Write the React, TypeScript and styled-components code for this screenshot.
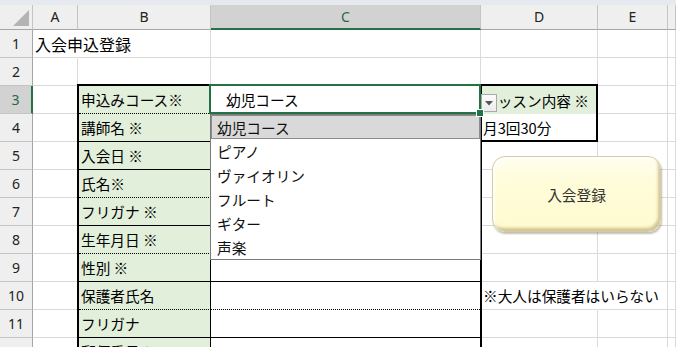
import React from 'react';
import styled, { createGlobalStyle } from 'styled-components';

const GREEN = '#217346';
const GRID = '#dadada';
const JP = '"Noto Sans CJK JP", "Noto Sans", sans-serif';

const GlobalStyle = createGlobalStyle`
  html, body { margin: 0; padding: 0; background: #fff; }
  body { font-family: ${JP}; }
`;

const Sheet = styled.div`
  display: grid;
  grid-template-columns: 33px 45px 133px 270px 117px 70px 1fr;
  grid-template-rows: 5px 25px repeat(12, 28px);
  width: 676px;
  height: 347px;
  overflow: hidden;
  background: #fff;
  font-family: ${JP};
  color: #000;
`;

const TopStrip = styled.div`
  grid-column: 1 / -1;
  grid-row: 1;
  background: #e6e9ef;
`;

const Corner = styled.div`
  grid-column: 1;
  grid-row: 2;
  background: #efefef;
  border-right: 1px solid #c4c4c4;
  border-bottom: 1px solid #a6a6a6;
  display: flex;
  align-items: flex-end;
  justify-content: flex-end;
  padding: 0 3px 3px 0;
`;

const ColHeader = styled.div<{ $col: number; $active?: boolean }>`
  grid-column: ${(p) => p.$col};
  grid-row: 2;
  display: flex;
  align-items: center;
  justify-content: center;
  background: ${(p) => (p.$active ? '#d2d2d2' : '#efefef')};
  border-right: 1px solid #c4c4c4;
  border-bottom: ${(p) => (p.$active ? `2px solid ${GREEN}` : '1px solid #a6a6a6')};
  color: ${(p) => (p.$active ? '#1d6b43' : '#222')};
  font: 14px "Noto Sans", sans-serif;
  padding-bottom: 1px;
`;

const RowHeader = styled.div<{ $row: number; $active?: boolean }>`
  grid-column: 1;
  grid-row: ${(p) => p.$row + 2};
  display: flex;
  align-items: center;
  justify-content: center;
  background: ${(p) => (p.$active ? '#d2d2d2' : '#efefef')};
  border-right: ${(p) => (p.$active ? `2px solid ${GREEN}` : '1px solid #a6a6a6')};
  border-bottom: 1px solid #c4c4c4;
  color: ${(p) => (p.$active ? '#1d6b43' : '#222')};
  font: 14px "Noto Sans", sans-serif;
`;

const Cell = styled.div<{ $row: number; $col: number; $open?: boolean; $size?: number }>`
  grid-column: ${(p) => p.$col + 1};
  grid-row: ${(p) => p.$row + 2};
  border-right: 1px solid ${(p) => (p.$open ? 'transparent' : GRID)};
  border-bottom: 1px solid ${GRID};
  display: flex;
  align-items: center;
  padding-left: 2px;
  white-space: nowrap;
  overflow: visible;
  font-size: ${(p) => p.$size ?? 14.67}px;
  z-index: ${(p) => (p.$open ? 1 : 0)};
`;

const FormTable = styled.div`
  grid-column: 3 / 5;
  grid-row: 5 / 15;
  margin: -2px -1px 0 -1px;
  border: 2px solid #000;
  border-bottom: none;
  display: grid;
  grid-template-columns: 132px 1fr;
  grid-auto-rows: 28px;
  z-index: 2;
  background: #fff;
`;

const FormLabel = styled.div<{ $line: 'solid' | 'dotted' }>`
  background: #e2efda;
  border-right: 1px solid #000;
  border-bottom: 1px ${(p) => p.$line} #000;
  display: flex;
  align-items: center;
  padding-left: 2px;
  font-size: 14.67px;
  white-space: nowrap;
`;

const FormValue = styled.div<{ $line: 'solid' | 'dotted' }>`
  background: #fff;
  border-bottom: 1px ${(p) => p.$line} #000;
  display: flex;
  align-items: center;
  padding-left: 15px;
  font-size: 14.67px;
  white-space: nowrap;
`;

const LessonBox = styled.div`
  grid-column: 5;
  grid-row: 5 / 7;
  margin: -2px 0 0 1px;
  border: 2px solid #000;
  border-left: none;
  display: grid;
  grid-template-rows: 28px 1fr;
  z-index: 2;
`;

const LessonCell = styled.div<{ $head?: boolean }>`
  background: ${(p) => (p.$head ? '#e2efda' : '#fff')};
  display: flex;
  align-items: center;
  padding-left: 1px;
  font-size: 14.67px;
  white-space: nowrap;
  overflow: hidden;
`;

const Selection = styled.div`
  grid-column: 4;
  grid-row: 5;
  margin: -2px 0 0 -2px;
  border: 2px solid ${GREEN};
  position: relative;
  z-index: 5;
`;

const FillHandle = styled.div`
  position: absolute;
  right: -4px;
  bottom: -4px;
  width: 6px;
  height: 6px;
  background: ${GREEN};
  box-shadow: 0 0 0 1px #fff;
`;

const DropArrow = styled.div`
  position: absolute;
  left: calc(100% + 2px);
  top: 8px;
  width: 16px;
  height: 18px;
  box-sizing: border-box;
  border: 1px solid #a9a9a9;
  background: linear-gradient(#fbfbfb, #ececec);
  display: flex;
  align-items: center;
  justify-content: center;
`;

const DropList = styled.ul`
  position: absolute;
  left: -1px;
  top: calc(100% + 2px);
  width: 271px;
  box-sizing: border-box;
  margin: 0;
  padding: 0;
  list-style: none;
  background: #fff;
  border: 1px solid #7a7a7a;
`;

const DropItem = styled.li<{ $selected?: boolean }>`
  height: 24px;
  box-sizing: border-box;
  display: flex;
  align-items: center;
  padding-left: ${(p) => (p.$selected ? 5 : 6)}px;
  font-size: 14.67px;
  color: #111;
  background: ${(p) => (p.$selected ? '#d9d9d9' : '#fff')};
  border: ${(p) => (p.$selected ? '1px solid #8c8c8c' : 'none')};
`;

const ShapeButton = styled.button`
  grid-column: 5 / 8;
  grid-row: 7 / 10;
  justify-self: start;
  align-self: start;
  margin: 14px 0 0 11px;
  width: 169px;
  height: 76px;
  border-radius: 13px;
  border: 1px solid #d6cc9c;
  background: linear-gradient(#fffef0 0%, #fffcd9 35%, #fffad0 100%);
  box-shadow:
    inset 2px 2px 2px #ffffff,
    inset -2px -3px 3px rgba(150, 130, 70, 0.45),
    1px 2px 2px rgba(80, 70, 40, 0.35);
  font-family: ${JP};
  font-size: 14.67px;
  color: #333;
  z-index: 3;
  padding: 0;
`;

const columns = ['A', 'B', 'C', 'D', 'E', ''];

const formRows: { label: string; value?: string; line: 'solid' | 'dotted' }[] = [
  { label: '申込みコース※', value: '幼児コース', line: 'dotted' },
  { label: '講師名 ※', line: 'solid' },
  { label: '入会日 ※', line: 'solid' },
  { label: '氏名※', line: 'dotted' },
  { label: 'フリガナ ※', line: 'solid' },
  { label: '生年月日 ※', line: 'dotted' },
  { label: '性別 ※', line: 'solid' },
  { label: '保護者氏名', line: 'dotted' },
  { label: 'フリガナ', line: 'solid' },
  { label: '郵便番号※', line: 'solid' },
];

const courses = ['幼児コース', 'ピアノ', 'ヴァイオリン', 'フルート', 'ギター', '声楽'];

const cellText: Record<string, { text: string; size?: number }> = {
  '1-1': { text: '入会申込登録', size: 16 },
  '10-4': { text: '※大人は保護者はいらない' },
};

const App: React.FC = () => {
  const rows = Array.from({ length: 12 }, (_, i) => i + 1);

  return (
    <>
      <GlobalStyle />
      <Sheet>
        <TopStrip />
        <Corner>
          <svg width="16" height="16" viewBox="0 0 16 16">
            <polygon points="16,0 16,16 0,16" fill="#b4b4b4" />
          </svg>
        </Corner>
        {columns.map((c, i) => (
          <ColHeader key={i} $col={i + 2} $active={c === 'C'}>
            {c}
          </ColHeader>
        ))}
        {rows.map((r) => (
          <RowHeader key={r} $row={r} $active={r === 3}>
            {r}
          </RowHeader>
        ))}
        {rows.map((r) =>
          columns.map((_, ci) => {
            const content = cellText[`${r}-${ci + 1}`];
            return (
              <Cell key={`${r}-${ci}`} $row={r} $col={ci + 1} $open={!!content} $size={content?.size}>
                {content?.text}
              </Cell>
            );
          })
        )}

        <FormTable>
          {formRows.map((row, i) => (
            <React.Fragment key={i}>
              <FormLabel $line={row.line}>{row.label}</FormLabel>
              <FormValue $line={row.line}>{row.value}</FormValue>
            </React.Fragment>
          ))}
        </FormTable>

        <LessonBox>
          <LessonCell $head>レッスン内容 ※</LessonCell>
          <LessonCell>月3回30分</LessonCell>
        </LessonBox>

        <ShapeButton>入会登録</ShapeButton>

        <Selection>
          <DropArrow>
            <svg width="8" height="5" viewBox="0 0 8 5">
              <polygon points="0,0 8,0 4,4.5" fill="#555" />
            </svg>
          </DropArrow>
          <DropList>
            {courses.map((c, i) => (
              <DropItem key={c} $selected={i === 0}>
                {c}
              </DropItem>
            ))}
          </DropList>
          <FillHandle />
        </Selection>
      </Sheet>
    </>
  );
};

export default App;
